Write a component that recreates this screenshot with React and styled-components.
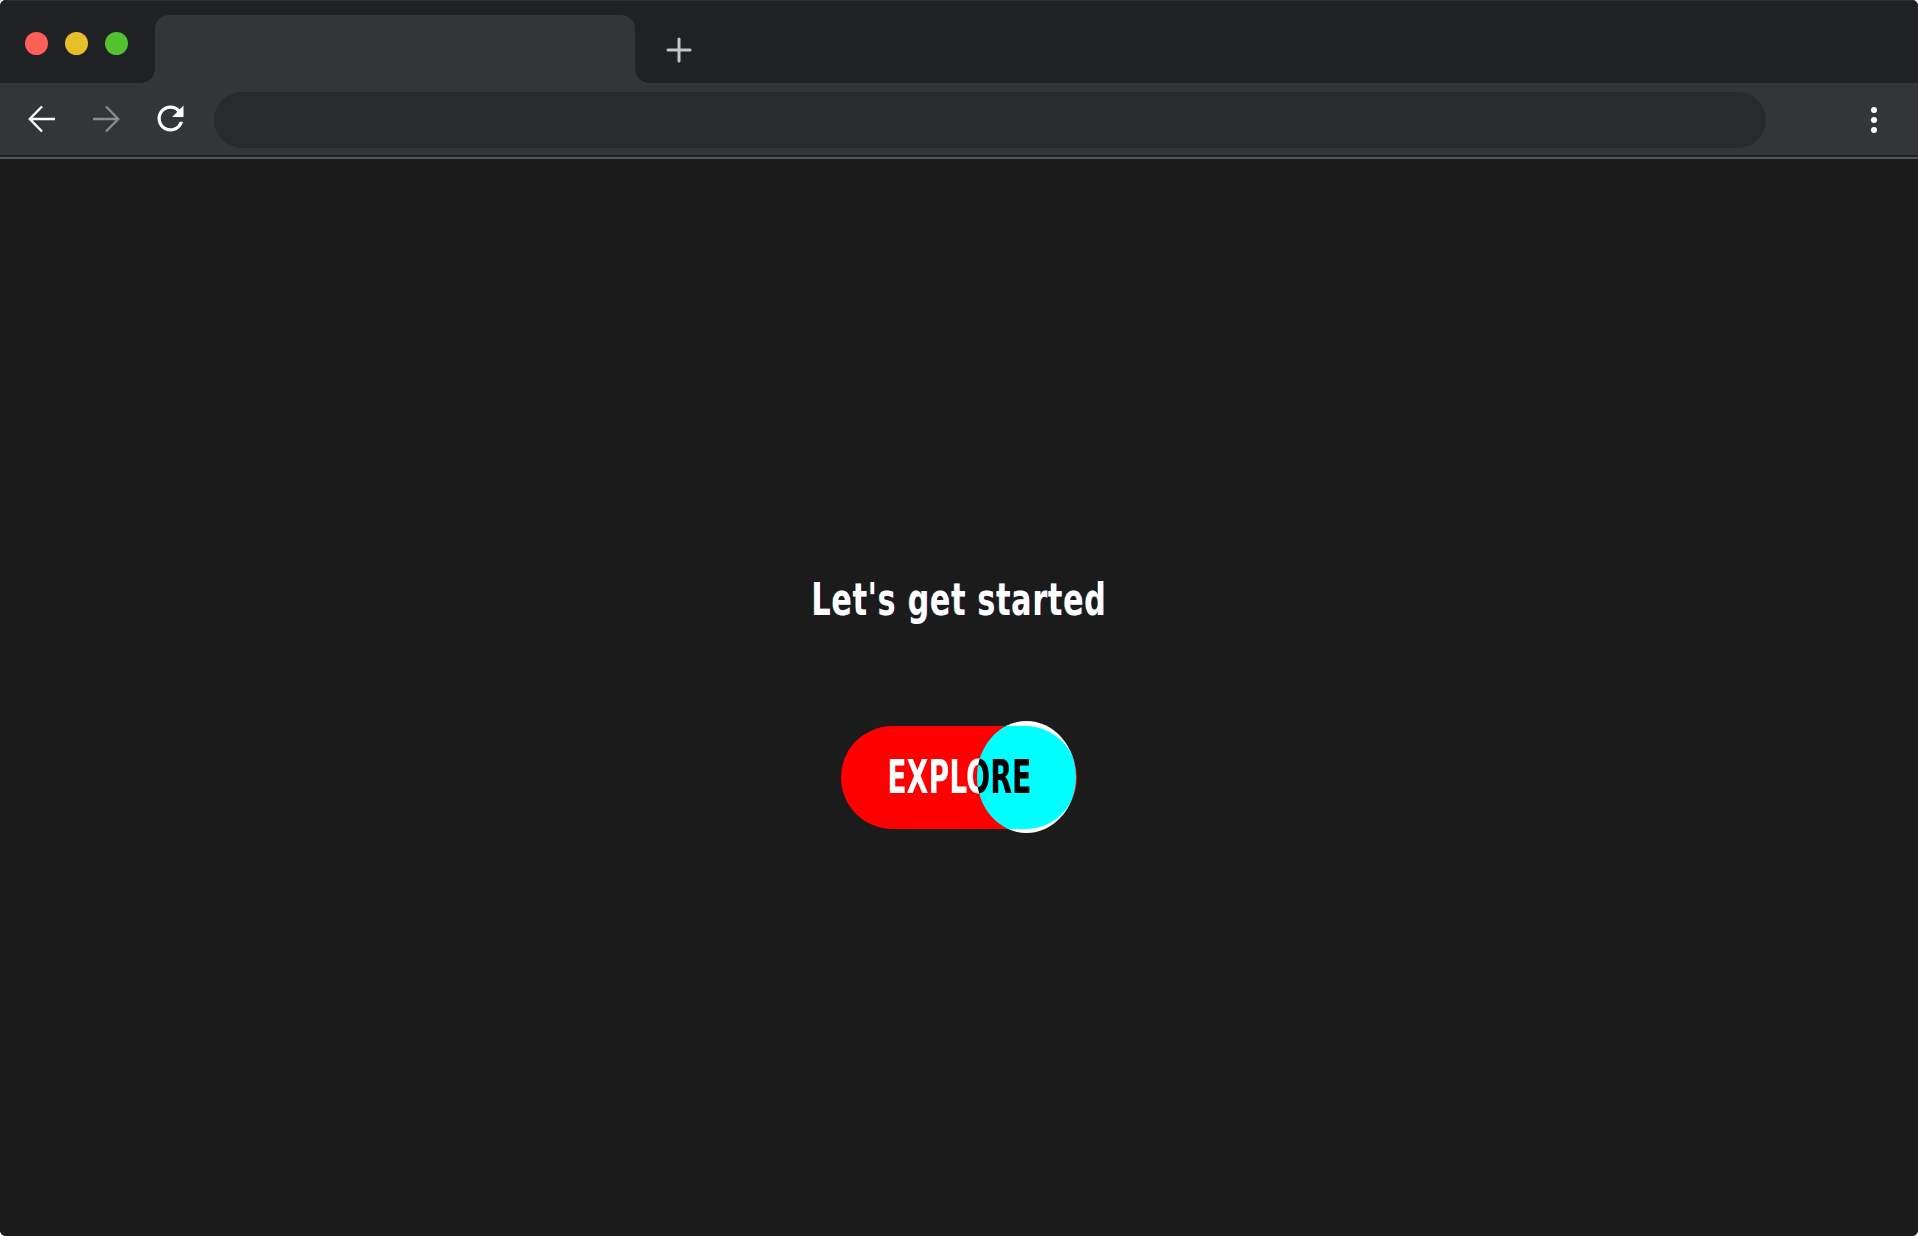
import React from "react";
import styled, { createGlobalStyle } from "styled-components";

const GlobalStyle = createGlobalStyle`
  html, body {
    margin: 0;
    padding: 0;
    background: #ffffff;
  }
  #root {
    height: 100vh;
  }
`;

const TAB = "#323639";
const DARK = "#202124";

const Window = styled.div`
  display: flex;
  flex-direction: column;
  height: 100vh;
  border-radius: 6px;
  overflow: hidden;
  background: #1b1b1b;
  font-family: "Liberation Sans Narrow", "DejaVu Sans Condensed", "Liberation Sans", sans-serif;
`;

const TitleBar = styled.div`
  display: flex;
  align-items: flex-end;
  height: 83px;
  background: ${DARK};
  border-top: 1px solid #2c2d30;
  box-sizing: border-box;
`;

const Lights = styled.div`
  display: flex;
  align-self: center;
  gap: 17px;
  width: 155px;
  padding-left: 25px;
  box-sizing: border-box;
  margin-top: 2px;
`;

const Light = styled.span`
  width: 23px;
  height: 23px;
  border-radius: 50%;
  background: ${(p) => p.$color};
`;

const Tab = styled.div`
  position: relative;
  width: 480px;
  height: 68px;
  background: ${TAB};
  border-radius: 14px 14px 0 0;

  &::before,
  &::after {
    content: "";
    position: absolute;
    bottom: 0;
    width: 14px;
    height: 14px;
  }
  &::before {
    left: -14px;
    background: radial-gradient(circle at 0 0, transparent 13.5px, ${TAB} 14px);
  }
  &::after {
    right: -14px;
    background: radial-gradient(circle at 100% 0, transparent 13.5px, ${TAB} 14px);
  }
`;

const NewTab = styled.button`
  display: flex;
  align-items: center;
  justify-content: center;
  align-self: center;
  margin: 15px 0 0 31px;
  padding: 0;
  border: none;
  background: none;
`;

const Toolbar = styled.div`
  display: flex;
  align-items: center;
  height: 74px;
  background: ${TAB};
  border-bottom: 2px solid #565656;
  box-shadow: inset 0 -2px 0 #1f2022;
  padding: 0 0 0 22px;
`;

const NavButton = styled.button`
  display: flex;
  align-items: center;
  justify-content: center;
  width: 40px;
  height: 40px;
  margin: -3px 24px 0 0;
  padding: 0;
  border: none;
  background: none;
  color: ${(p) => (p.$dim ? "#8a8b8d" : "#ffffff")};
`;

const Omnibox = styled.div`
  flex: 0 0 1552px;
  height: 56px;
  margin-top: -1px;
  border-radius: 28px;
  background: #282b2e;
`;

const Menu = styled.div`
  display: flex;
  flex-direction: column;
  gap: 4px;
  margin-left: 105px;
  margin-top: -1px;
`;

const Dot = styled.span`
  width: 6px;
  height: 6px;
  border-radius: 50%;
  background: #ffffff;
`;

const Content = styled.main`
  flex: 1;
  display: flex;
  flex-direction: column;
  align-items: center;
  justify-content: center;
  gap: 99px;
  padding-top: 16px;
  background: #1b1b1b;
`;

const Heading = styled.h1`
  margin: 0;
  font-size: 44px;
  line-height: 1;
  font-weight: 700;
  letter-spacing: 1px;
  color: #ffffff;
  transform: scaleX(0.76);
  text-shadow: -1px 0 rgba(0, 190, 255, 0.55), 1px 0 rgba(255, 40, 40, 0.55);
`;

const Explore = styled.button`
  position: relative;
  display: flex;
  align-items: center;
  width: 236px;
  height: 112px;
  padding: 0;
  border: none;
  background: none;
  cursor: pointer;
  isolation: isolate;
`;

const Pill = styled.span`
  display: flex;
  align-items: center;
  justify-content: center;
  width: 100%;
  height: 103px;
  border-radius: 52px;
  background: #ff0000;
`;

const Label = styled.span`
  display: inline-block;
  font-family: "Liberation Sans Narrow", "DejaVu Sans Condensed", "Liberation Sans", sans-serif;
  font-size: 46px;
  font-weight: 700;
  line-height: 1;
  color: #ffffff;
  transform: scaleX(0.685);
`;

const Blob = styled.span`
  position: absolute;
  top: 0;
  right: 1px;
  width: 99px;
  height: 112px;
  border-radius: 50%;
  background: #ffffff;
  mix-blend-mode: difference;
`;

const BackIcon = ({ color }) => (
  <svg width="30" height="30" viewBox="0 0 30 30" fill="none" stroke={color} strokeWidth="2.4">
    <path d="M28 15H3M15 2.5L2.8 15 15 27.5" />
  </svg>
);

const ForwardIcon = ({ color }) => (
  <svg width="30" height="30" viewBox="0 0 30 30" fill="none" stroke={color} strokeWidth="2.4">
    <path d="M2 15h25M15 2.5L27.2 15 15 27.5" />
  </svg>
);

const ReloadIcon = () => (
  <svg width="39" height="39" viewBox="0 0 24 24" fill="#ffffff">
    <path d="M17.65 6.35C16.2 4.9 14.21 4 12 4c-4.42 0-7.99 3.58-7.99 8s3.57 8 7.99 8c3.73 0 6.84-2.55 7.73-6h-2.08c-.82 2.33-3.04 4-5.65 4-3.31 0-6-2.69-6-6s2.69-6 6-6c1.66 0 3.14.69 4.22 1.78L13 11h7V4l-2.35 2.35z" />
  </svg>
);

const PlusIcon = () => (
  <svg width="26" height="26" viewBox="0 0 26 26" stroke="#c4c6c9" strokeWidth="3" strokeLinecap="round">
    <path d="M13 2v22M2 13h22" />
  </svg>
);

const App = () => {
  return (
    <>
      <GlobalStyle />
      <Window>
        <TitleBar>
          <Lights>
            <Light $color="#fe5f57" />
            <Light $color="#e6bf2b" />
            <Light $color="#52c22f" />
          </Lights>
          <Tab />
          <NewTab aria-label="New tab">
            <PlusIcon />
          </NewTab>
        </TitleBar>
        <Toolbar>
          <NavButton aria-label="Back">
            <BackIcon color="#ffffff" />
          </NavButton>
          <NavButton $dim aria-label="Forward">
            <ForwardIcon color="#8a8b8d" />
          </NavButton>
          <NavButton aria-label="Reload">
            <ReloadIcon />
          </NavButton>
          <Omnibox />
          <Menu>
            <Dot />
            <Dot />
            <Dot />
          </Menu>
        </Toolbar>
        <Content>
          <Heading>Let's get started</Heading>
          <Explore>
            <Pill>
              <Label>EXPLORE</Label>
            </Pill>
            <Blob />
          </Explore>
        </Content>
      </Window>
    </>
  );
};

export default App;
